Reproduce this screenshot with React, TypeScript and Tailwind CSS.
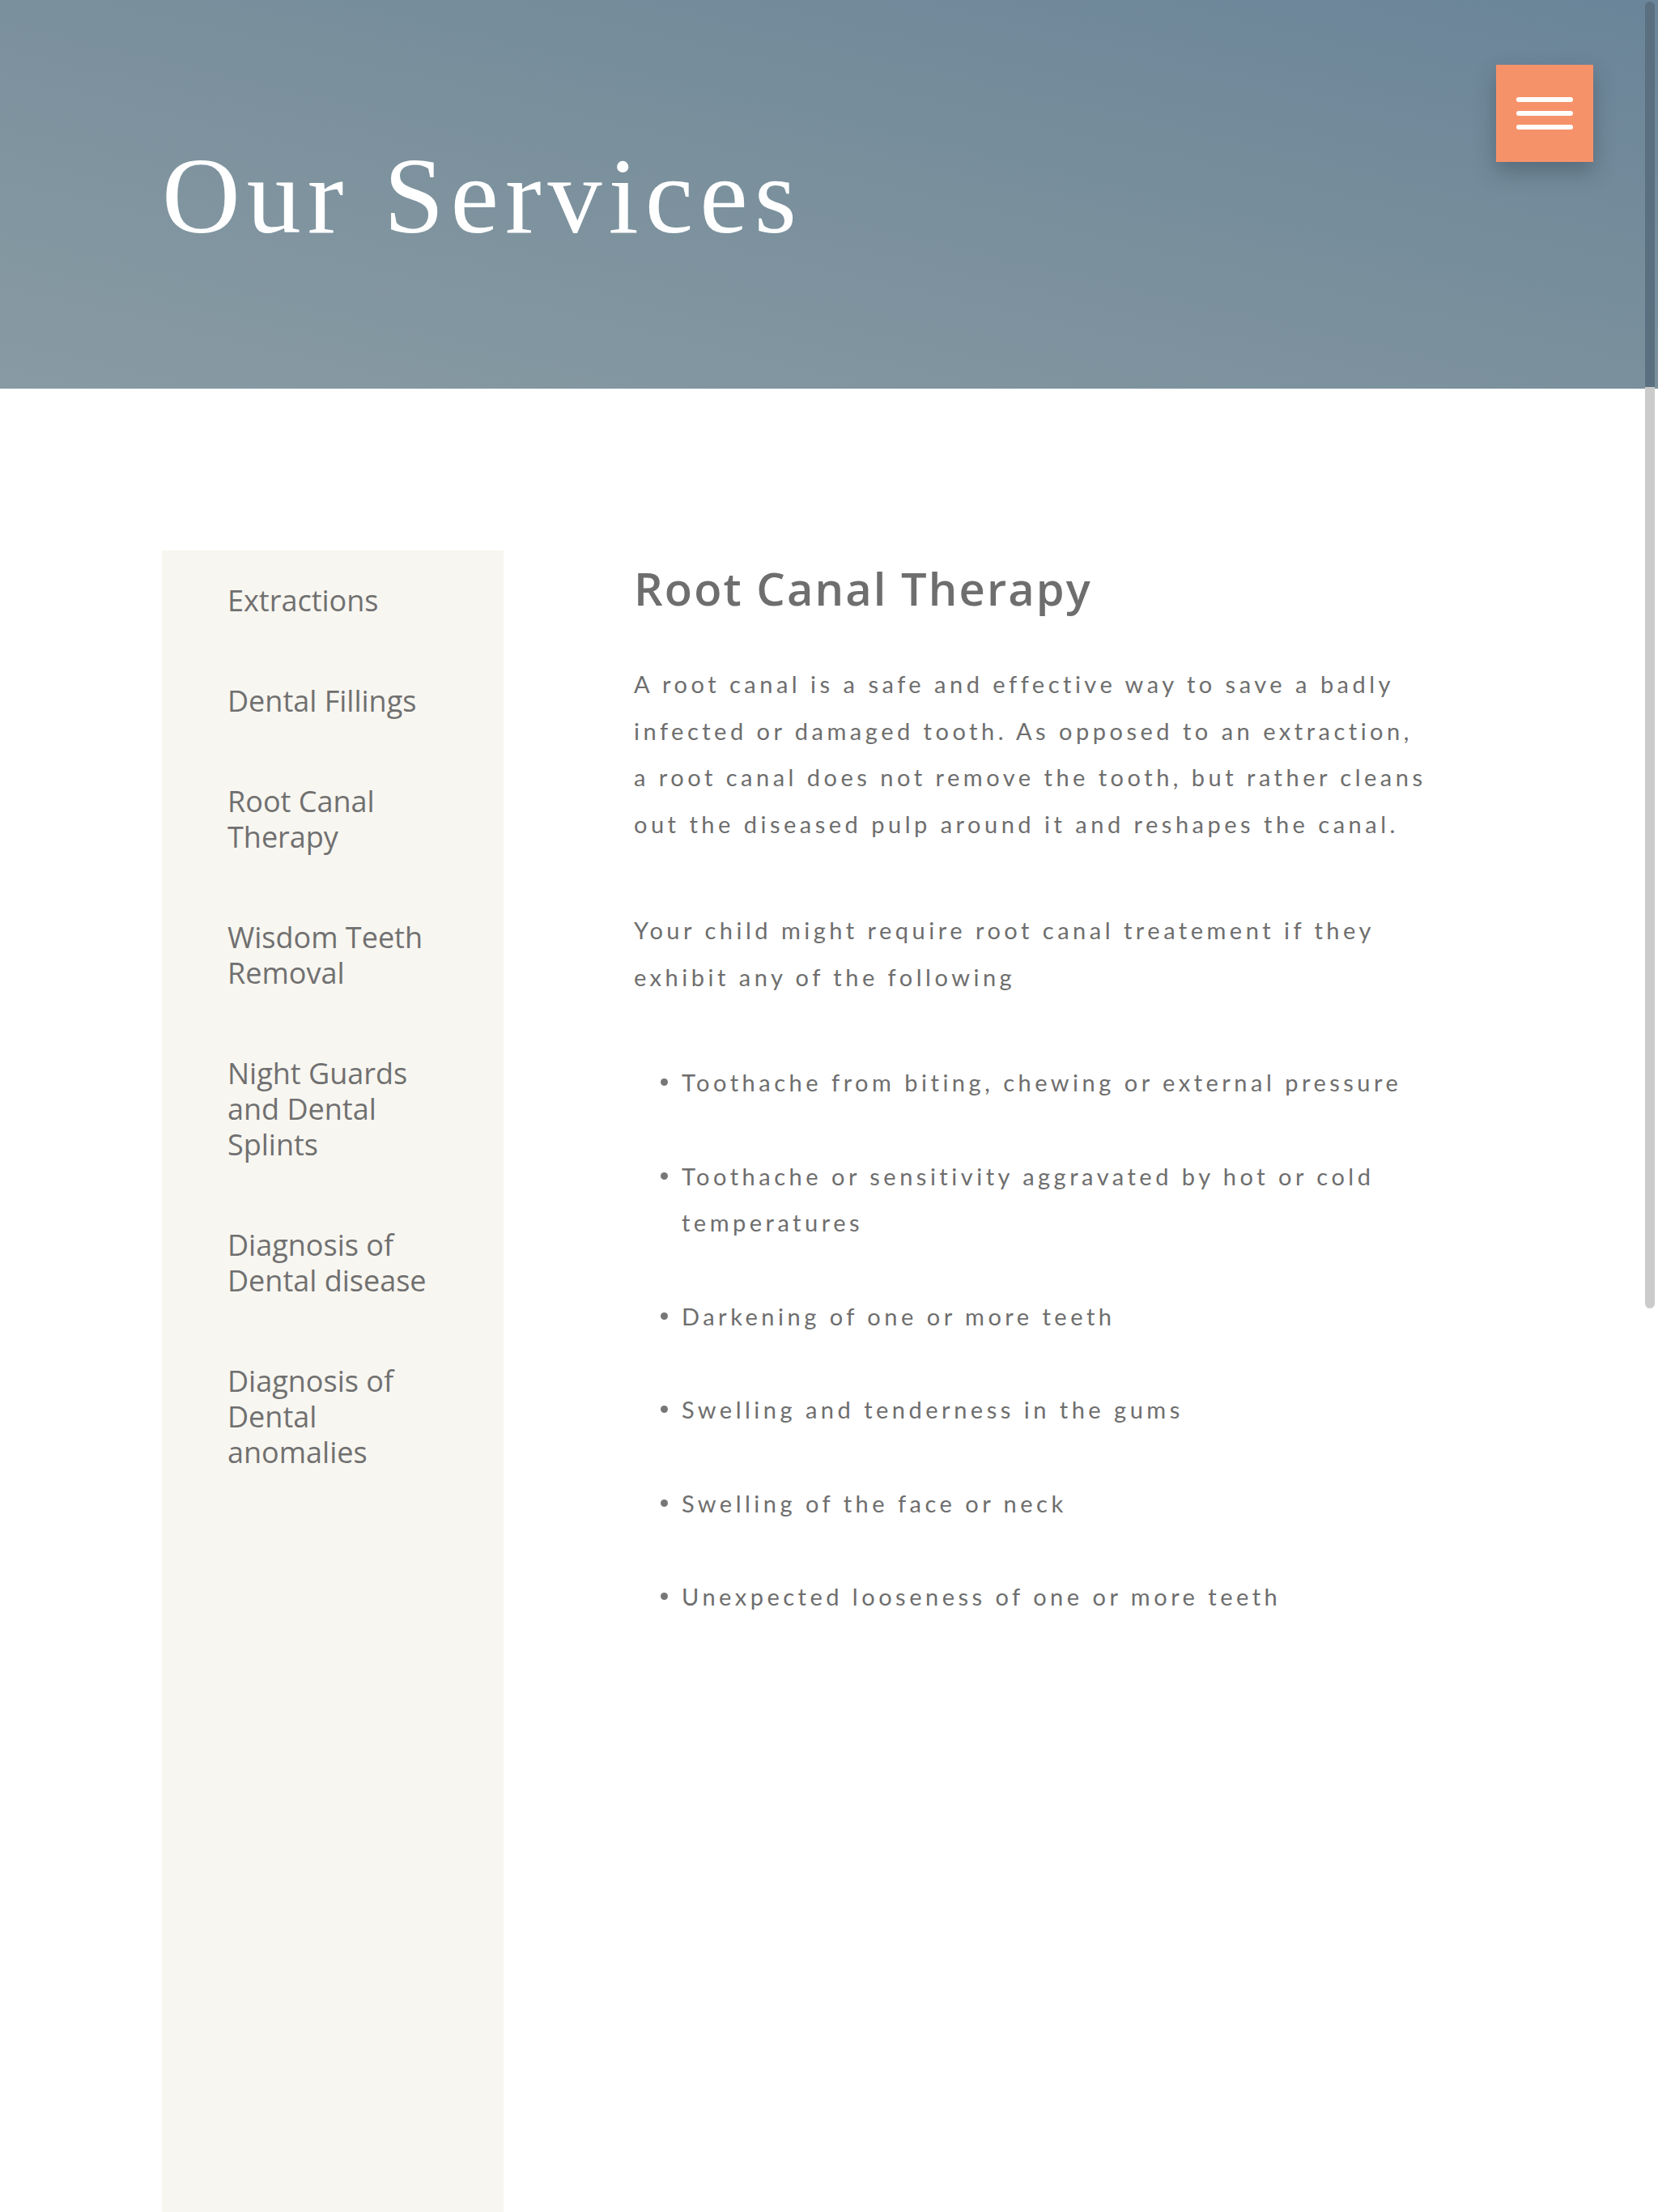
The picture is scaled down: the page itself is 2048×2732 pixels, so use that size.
import React from "react";

const sidebarItems: string[][] = [
  ["Extractions"],
  ["Dental Fillings"],
  ["Root Canal", "Therapy"],
  ["Wisdom Teeth", "Removal"],
  ["Night Guards", "and Dental", "Splints"],
  ["Diagnosis of", "Dental disease"],
  ["Diagnosis of", "Dental", "anomalies"],
];

const para1 = [
  "A root canal is a safe and effective way to save a badly",
  "infected or damaged tooth. As opposed to an extraction,",
  "a root canal does not remove the tooth, but rather cleans",
  "out the diseased pulp around it and reshapes the canal.",
];

const para2 = [
  "Your child might require root canal treatement if they",
  "exhibit any of the following",
];

const bullets: string[][] = [
  ["Toothache from biting, chewing or external pressure"],
  ["Toothache or sensitivity aggravated by hot or cold", "temperatures"],
  ["Darkening of one or more teeth"],
  ["Swelling and tenderness in the gums"],
  ["Swelling of the face or neck"],
  ["Unexpected looseness of one or more teeth"],
];

export default function App() {
  return (
    <div className="relative w-full min-h-[2732px] bg-white flex flex-col overflow-hidden">
      {/* Header */}
      <header className="h-[480px] w-full shrink-0 bg-[linear-gradient(to_top_right,#889ba4,#7a909c_50%,#6a8499)] pl-[200px] pt-[175px]">
        <h1 className="text-white text-[134px] leading-none tracking-[8px] font-normal [font-family:'Liberation_Serif',serif]">
          Our Services
        </h1>
      </header>

      {/* Menu button */}
      <button className="absolute top-[80px] right-[80px] w-[120px] h-[120px] bg-[#f6926a] shadow-[0_12px_24px_rgba(40,55,65,0.35)] flex flex-col items-center justify-center gap-[11px]">
        <span className="block w-[70px] h-[6px] rounded-full bg-white" />
        <span className="block w-[70px] h-[6px] rounded-full bg-white" />
        <span className="block w-[70px] h-[6px] rounded-full bg-white" />
      </button>

      {/* Scrollbar thumb overlay */}
      <div className="absolute top-[2px] right-[4px] w-[12px] h-[1614px] rounded-full bg-[linear-gradient(to_bottom,#5a7080_0px,#5a7080_476px,#cbcbcb_476px)]" />

      {/* Body */}
      <div className="flex flex-1 flex-row pl-[200px] pt-[200px]">
        <aside className="w-[422px] shrink-0 bg-[#f8f6f0] pl-[81px] [font-family:'Open_Sans',sans-serif] text-[#707070] text-[36px] leading-[44px]">
          {sidebarItems.map((lines, i) => (
            <div key={i} className="py-10 flex flex-col">
              {lines.map((l, j) => (
                <span key={j} className="block h-[44px] whitespace-nowrap">
                  {l}
                </span>
              ))}
            </div>
          ))}
        </aside>

        <main className="ml-[161px] pt-[13px] text-[#6e6e6e]">
          <h2 className="text-[56px] leading-[67px] font-semibold tracking-[2.1px] [font-family:'Open_Sans',sans-serif] text-[#6e6e6e]">
            Root Canal Therapy
          </h2>

          <div className="[font-family:Lato,sans-serif] font-normal text-[29px] leading-[57.5px] tracking-[4.5px]">
            <p className="mt-[56px]">
              {para1.map((l, i) => (
                <span key={i} className="block whitespace-nowrap">
                  {l}
                </span>
              ))}
            </p>
            <p className="mt-[74px]">
              {para2.map((l, i) => (
                <span key={i} className="block whitespace-nowrap">
                  {l}
                </span>
              ))}
            </p>
            <ul className="mt-[73px] flex flex-col gap-[58px]">
              {bullets.map((lines, i) => (
                <li key={i} className="flex flex-row pl-[33px]">
                  <span className="mt-[24px] w-[9px] h-[9px] rounded-full bg-[#777] shrink-0" />
                  <span className="ml-[17px] flex flex-col">
                    {lines.map((l, j) => (
                      <span key={j} className="block whitespace-nowrap">
                        {l}
                      </span>
                    ))}
                  </span>
                </li>
              ))}
            </ul>
          </div>
        </main>
      </div>
    </div>
  );
}
